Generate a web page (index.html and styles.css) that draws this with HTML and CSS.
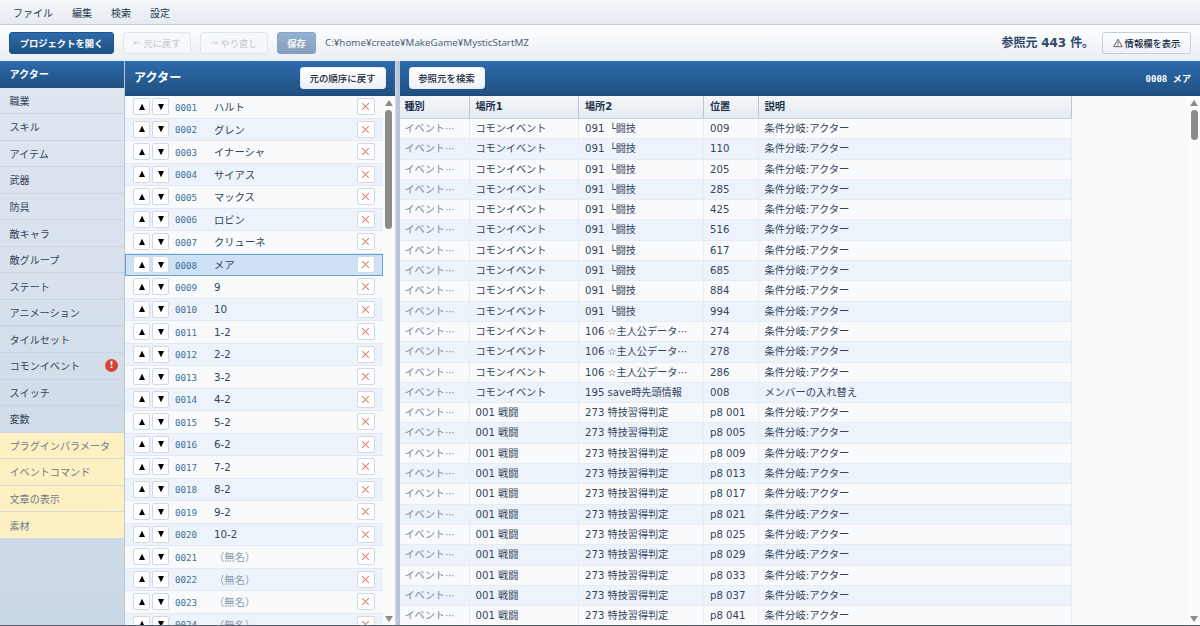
FILE: index.html
```html
<!DOCTYPE html>
<html lang="ja">
<head>
    <meta charset="UTF-8">
    <meta name="viewport" content="width=device-width, initial-scale=1.0">
    <title>MysticStartMZ</title>
    <link rel="stylesheet" href="styles.css">
</head>
<body>
    <div class="app">
        <div class="menuBar">
            <span>ファイル</span>
            <span>編集</span>
            <span>検索</span>
            <span>設定</span>
        </div>
        <div class="toolBar">
            <button class="btn primary btnOpen">プロジェクトを開く</button>
            <button class="btn btnUndo" disabled>
                <svg class="undoIcon" viewBox="0 0 8 8"><path d="M1 4.6h2.6M1 4.6V2M1.2 4.3C2.6 2.4 5.6 2 7 5"/></svg>元に戻す
            </button>
            <button class="btn btnRedo" disabled>
                <svg class="undoIcon" viewBox="0 0 8 8"><path d="M7 4.6H4.4M7 4.6V2M6.8 4.3C5.4 2.4 2.4 2 1 5"/></svg>やり直し
            </button>
            <button class="btn primary btnSave" disabled>保存</button>
            <span class="path">C:¥home¥create¥MakeGame¥MysticStartMZ</span>
            <span class="status">参照元 443 件。</span>
            <button class="btn btnInfo">
                <svg class="warnIcon" viewBox="0 0 10 10"><path d="M5 1.2 9.2 8.7H.8ZM5 3.8v2.5M5 7.1v.8"/></svg>情報欄を表示
            </button>
        </div>
        <div class="main">
            <div class="sideBar" id="sideBar"></div>
            <div class="listPane">
                <div class="paneHeader">
                    <h1 class="paneTitle">アクター</h1>
                    <button class="btn headBtn btnOrder">元の順序に戻す</button>
                </div>
                <div class="paneBody">
                    <div class="actorList" id="actorList"></div>
                    <div class="scrollBar">
                        <i class="arrowUp"></i>
                        <i class="thumb listThumb"></i>
                        <i class="arrowDown"></i>
                    </div>
                </div>
            </div>
            <div class="splitter"></div>
            <div class="refPane">
                <div class="paneHeader">
                    <button class="btn headBtn btnSearch">参照元を検索</button>
                    <span class="target">0008 メア</span>
                </div>
                <div class="paneBody">
                    <div class="refTable" id="refTable">
                        <div class="refRow refHead"><span>種別</span><span>場所1</span><span>場所2</span><span>位置</span><span>説明</span></div>
                    </div>
                    <div class="scrollBar">
                        <i class="arrowUp"></i>
                        <i class="thumb refThumb"></i>
                        <i class="arrowDown"></i>
                    </div>
                </div>
            </div>
        </div>
    </div>
    <script>
        const menus = ['アクター','職業','スキル','アイテム','武器','防具','敵キャラ','敵グループ','ステート','アニメーション','タイルセット','コモンイベント','スイッチ','変数'];
        const extras = ['プラグインパラメータ','イベントコマンド','文章の表示','素材'];
        const actors = ['ハルト','グレン','イナーシャ','サイアス','マックス','ロビン','クリューネ','メア','9','10','1-2','2-2','3-2','4-2','5-2','6-2','7-2','8-2','9-2','10-2','','','',''];
        const refs = [];
        ['009','110','205','285','425','516','617','685','884','994'].forEach((p) => refs.push(['コモンイベント','091 <i></i>└闘技',p,'条件分岐:アクター']));
        ['274','278','286'].forEach((p) => refs.push(['コモンイベント','106 ☆主人公データ<b>⋯</b>',p,'条件分岐:アクター']));
        refs.push(['コモンイベント','195 save時先頭情報','008','メンバーの入れ替え']);
        ['001','005','009','013','017','021','025','029','033','037','041'].forEach((p) => refs.push(['001 戦闘','273 特技習得判定','p8 ' + p,'条件分岐:アクター']));

        const sideBar = document.getElementById('sideBar');
        menus.forEach((name, i) => {
            const badge = name === 'コモンイベント' ? '<span class="badge">!</span>' : '';
            sideBar.innerHTML += `<div class="sideItem${i === 0 ? ' active' : ''}">${name}${badge}</div>`;
        });
        extras.forEach((name) => {
            sideBar.innerHTML += `<div class="sideItem extra">${name}</div>`;
        });

        const up = '<svg viewBox="0 0 8 8"><path d="M4 .8 7 7H1Z"/></svg>';
        const down = '<svg viewBox="0 0 8 8"><path d="M1 1H7L4 7.2Z"/></svg>';
        const cross = '<svg viewBox="0 0 8 8"><path d="M1 1 7 7M7 1 1 7"/></svg>';
        document.getElementById('actorList').innerHTML = actors.map((name, i) => {
            const id = String(i + 1).padStart(4, '0');
            return `<div class="actorRow${id === '0008' ? ' selected' : ''}">
                <button class="mini">${up}</button><button class="mini">${down}</button>
                <span class="actorId">${id}</span>
                <span class="actorName${name ? '' : ' noName'}">${name || '（無名）'}</span>
                <button class="mini del">${cross}</button>
            </div>`;
        }).join('');

        document.getElementById('refTable').innerHTML += refs.map((r) =>
            `<div class="refRow"><span class="kind">イベント<b>⋯</b></span>${r.map((c) => `<span>${c}</span>`).join('')}</div>`
        ).join('');
    </script>
</body>
</html>
```
FILE: styles.css
```css
*{margin:0;padding:0;box-sizing:border-box;}
body{height:100vh;overflow:hidden;font-family:"DejaVu Sans","Noto Sans CJK JP",sans-serif;font-size:10.15px;color:#33445b;}
.app{height:100%;display:flex;flex-direction:column;border-bottom:1px solid #59606e;}
button{font-family:inherit;}

.menuBar{height:25px;flex:none;display:flex;gap:19px;padding:3px 13px 0;align-items:center;line-height:21px;background:linear-gradient(#f4f8fa,#e5eaf3);border-bottom:1px solid #c3cfe2;font-size:10px;color:#26384f;}
.toolBar{height:36px;flex:none;display:flex;align-items:center;padding:0 9px;background:linear-gradient(#fff,#e9eef4);}
.btn{height:22px;display:flex;align-items:center;justify-content:center;border:1px solid #c2cfdf;border-radius:3px;background:linear-gradient(#fff,#edf1f7);font-size:9.3px;font-weight:500;color:#17283c;white-space:nowrap;}
.primary{background:linear-gradient(#2d6bad,#20507f);border-color:#1f528a;color:#fff;font-weight:700;}
.btn:disabled{opacity:.5;}
.btnOpen{width:105px;}
.btnUndo,.btnRedo{width:68px;margin-left:9px;}
.btnUndo:disabled,.btnRedo:disabled{opacity:1;color:#c9ced5;border-color:#dfe5ec;background:#f6f8fa;}
.btnSave{width:39px;margin-left:9px;}
.undoIcon{width:8px;height:8px;margin-right:2px;fill:none;stroke:#c3c9d0;stroke-width:.8;}
.path{margin-left:9px;padding-bottom:2px;font-family:"Noto Sans","Noto Sans CJK JP",sans-serif;font-size:9.75px;color:#4f647c;}
.status{margin-left:auto;padding-bottom:3px;font-size:12px;letter-spacing:-.1px;font-weight:700;color:#2d486b;}
.btnInfo{width:89px;margin-left:8px;}
.warnIcon{width:10px;height:10px;margin-right:2px;fill:none;stroke:#3e3b43;stroke-width:.8;}

.main{flex:1;min-height:0;display:flex;}
.sideBar{width:125px;flex:none;background:linear-gradient(#e0e7f1,#cad7e5);border-right:1px solid #b9c8da;}
.sideItem{height:26.56px;display:flex;align-items:center;padding:0 6px 0 9.5px;border-bottom:1px solid #c8d4e2;font-size:10.1px;}
.sideItem.active{background:linear-gradient(#2d6bad,#20507f);border-bottom-color:#20507f;color:#fff;font-weight:700;}
.sideItem.extra{background:#fdf1c4;border-bottom-color:#d0dcd8;color:#707987;}
.badge{width:13px;height:13px;margin-left:auto;border-radius:50%;background:#d64637;color:#fff;font-size:9px;font-weight:700;line-height:13px;text-align:center;}

.listPane{width:269.5px;flex:none;display:flex;flex-direction:column;}
.refPane{flex:1;min-width:0;display:flex;flex-direction:column;}
.splitter{width:5px;flex:none;background:#b9c8d9;border-left:1px solid #d0dae6;}
.paneHeader{height:35px;flex:none;display:flex;align-items:center;justify-content:space-between;padding:0 9px;background:linear-gradient(#2d6bad,#20507f);border-bottom:1px solid #1d4a7b;color:#fff;}
.paneTitle{font-size:12.1px;font-weight:700;line-height:32px;}
.headBtn{border-color:#e6edf5;font-size:9.45px;}
.btnOrder{width:86px;}
.btnSearch{width:76px;}
.target{font-family:"DejaVu Sans Mono","Noto Sans CJK JP",monospace;font-size:9.1px;font-weight:700;}
.paneBody{flex:1;min-height:0;display:flex;background:#f8fafc;overflow:hidden;}

.actorList{flex:1;}
.actorRow{height:22.5px;display:flex;align-items:center;padding:0 8px;border-bottom:1px solid #e1e9f2;}
.actorRow:nth-child(even){background:#edf3fa;}
.actorRow.selected{background:#cde2f6;border:1px solid #6b9fd1;padding:0 7px;}
.mini{width:17px;height:17px;flex:none;display:flex;align-items:center;justify-content:center;margin-right:2px;border:1px solid #cfdae6;border-radius:2px;background:#fff;}
.mini svg{width:8px;height:8px;fill:#000;}
.mini.del{width:18px;margin:0 0 0 auto;}
.mini.del svg{width:9px;height:9px;fill:none;stroke:#d58470;stroke-width:.9;}
.actorId{width:39px;margin-left:4px;padding-top:1px;font-family:"DejaVu Sans Mono",monospace;font-size:9.2px;color:#416f98;}
.actorName{font-size:10.3px;}
.noName{color:#8b9caf;}

.scrollBar{width:12px;flex:none;display:flex;flex-direction:column;align-items:center;padding:4px 0 3px;background:#fcfcfc;}
.arrowUp{border:4px solid transparent;border-top:0;border-bottom:6px solid #8b8b8b;}
.arrowDown{margin-top:auto;border:4px solid transparent;border-bottom:0;border-top:6px solid #8b8b8b;}
.thumb{width:7px;margin-top:4px;border-radius:4px;background:#8b8b8b;}
.listThumb{height:119px;}
.refThumb{height:30px;}

.refTable{flex:1;}
.refRow{width:672px;height:20.31px;display:grid;grid-template-columns:70px 109.5px 125px 54.5px 313px;}
.refRow span{padding-left:6px;line-height:19px;white-space:nowrap;overflow:hidden;border-right:1px solid #e7edf4;border-bottom:1px solid #e6ecf4;}
.refRow span:last-child{font-size:10.3px;}
.refRow:nth-child(odd){background:#edf3fa;}
.refRow b{font-weight:400;}
.refRow i{margin-left:2px;}
.refRow .kind{padding-left:5px;color:#7889a0;}
.refRow.refHead{height:23px;background:linear-gradient(#f4f7f9,#e5ebf3);font-weight:700;color:#1d314b;}
.refHead span{line-height:21px;border-right:1.5px solid #b9c7d7;border-bottom-color:#c9d4e1;}
.refHead span:first-child{padding-left:5px;}
```
